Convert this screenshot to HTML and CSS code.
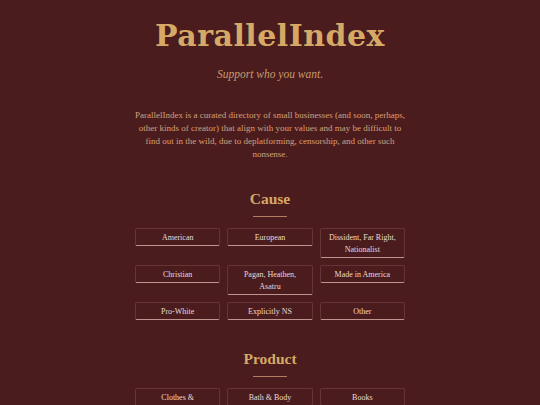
FILE: index.html
```html
<!DOCTYPE html>
<html>
<head>
<meta charset="utf-8">
<link rel="stylesheet" href="styles.css">
</head>
<body>
<div class="page">
  <h1 class="title">ParallelIndex</h1>
  <p class="tagline">Support who you want.</p>
  <p class="intro">ParallelIndex is a curated directory of small businesses (and soon, perhaps, other kinds of creator) that align with your values and may be difficult to find out in the wild, due to deplatforming, censorship, and other such nonsense.</p>

  <section class="group">
    <h2 class="group-title">Cause</h2>
    <div class="rule"></div>
    <div class="grid">
      <a class="tag">American</a>
      <a class="tag">European</a>
      <a class="tag">Dissident, Far Right, Nationalist</a>
      <a class="tag">Christian</a>
      <a class="tag">Pagan, Heathen, Asatru</a>
      <a class="tag">Made in America</a>
      <a class="tag">Pro-White</a>
      <a class="tag">Explicitly NS</a>
      <a class="tag">Other</a>
    </div>
  </section>

  <section class="group">
    <h2 class="group-title">Product</h2>
    <div class="rule"></div>
    <div class="grid">
      <a class="tag">Clothes &amp; Accessories</a>
      <a class="tag">Bath &amp; Body</a>
      <a class="tag">Books</a>
    </div>
  </section>
</div>
</body>
</html>
```
FILE: styles.css
```css
html, body {
  margin: 0;
  padding: 0;
}
body {
  background: #4a1c1e;
  font-family: "Liberation Serif", "DejaVu Serif", serif;
  overflow: hidden;
}
.page {
  width: 270px;
  margin: 0 auto;
  padding-top: 16px;
  text-align: center;
}
.title {
  margin: 0;
  font-family: "DejaVu Serif", "Liberation Serif", serif;
  font-size: 30px;
  line-height: 40px;
  font-weight: bold;
  letter-spacing: 0.5px;
  color: #d6a966;
}
.tagline {
  margin: 11px 0 0;
  font-size: 11.5px;
  line-height: 14px;
  font-style: italic;
  color: #c99a6c;
}
.intro {
  margin: 28px -2px 0;
  font-size: 9px;
  line-height: 13px;
  color: #d4a07a;
}
.group {
  margin-top: 28px;
}
.group + .group {
  margin-top: 29px;
}
.group-title {
  margin: 0;
  font-size: 15.5px;
  line-height: 20px;
  font-weight: bold;
  color: #d6a966;
}
.rule {
  width: 34px;
  height: 1px;
  margin: 7px auto 0;
  background: #b37b62;
}
.grid {
  margin-top: 11px;
  display: grid;
  grid-template-columns: repeat(3, 1fr);
  column-gap: 7px;
  row-gap: 7px;
  align-items: start;
}
.tag {
  display: block;
  padding: 3px 6px 1px;
  font-size: 8px;
  line-height: 12px;
  color: #eadad3;
  border: 1px solid #653535;
  border-bottom: 1px solid #c09590;
  border-radius: 2px;
}
```
